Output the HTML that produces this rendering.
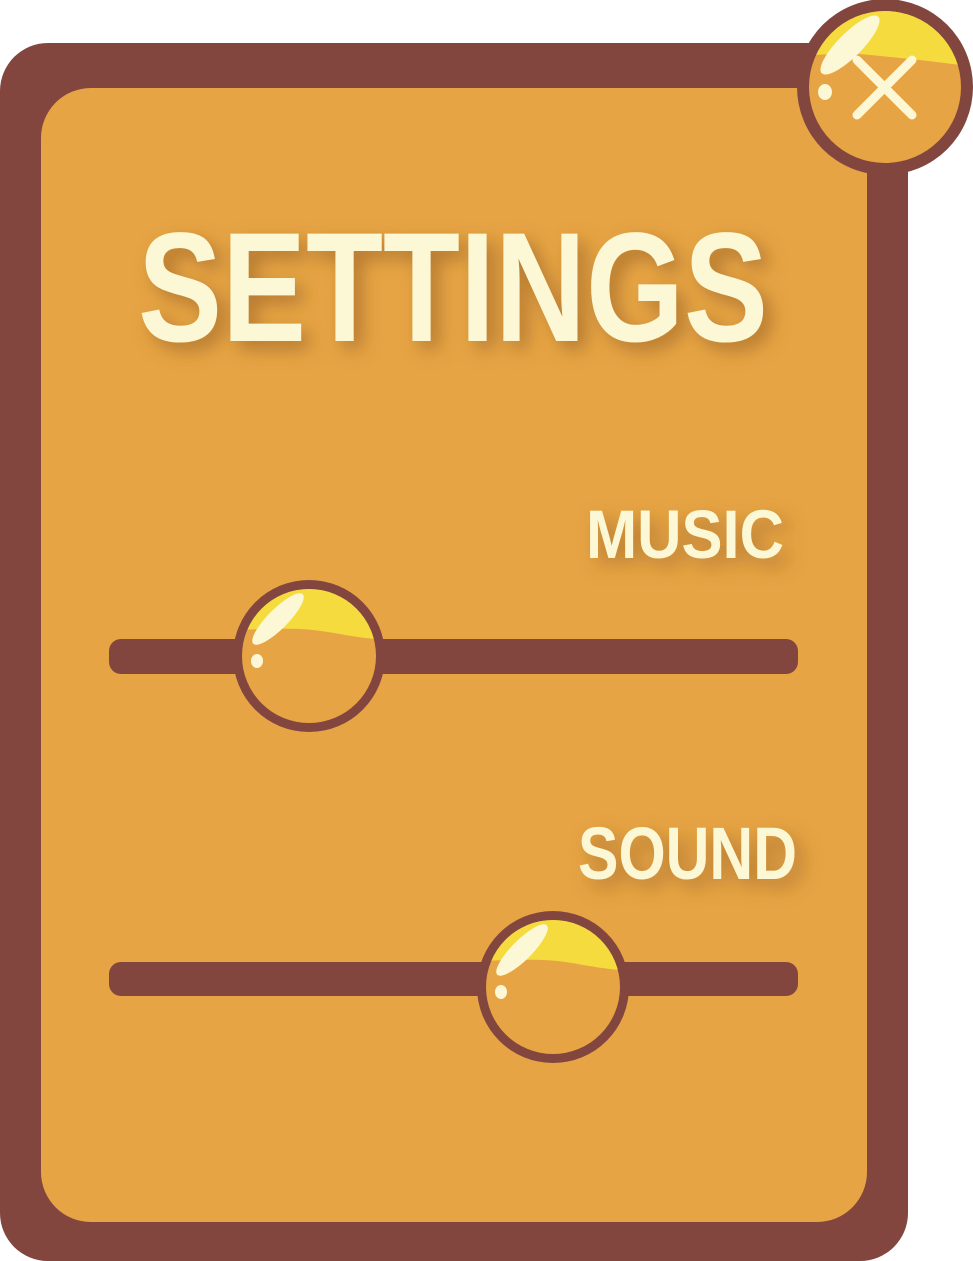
<!DOCTYPE html>
<html><head><meta charset="utf-8"><style>
html,body{margin:0;padding:0;background:#fff;width:973px;height:1261px;overflow:hidden}
svg{display:block}
text{font-family:"Liberation Sans",sans-serif;font-weight:bold;fill:#FCF8D5}
</style></head><body>
<svg width="973" height="1261" viewBox="0 0 973 1261" xmlns="http://www.w3.org/2000/svg">
<defs>
<filter id="sh" x="-20%" y="-40%" width="140%" height="180%">
<feGaussianBlur in="SourceAlpha" stdDeviation="9"/>
<feOffset dx="8" dy="8" result="b"/>
<feFlood flood-color="#8a5420" flood-opacity="0.55"/>
<feComposite in2="b" operator="in"/>
<feMerge><feMergeNode/><feMergeNode in="SourceGraphic"/></feMerge>
</filter>
<clipPath id="kc"><circle cx="0" cy="0" r="67"/></clipPath>
<g id="knob">
<circle r="76" fill="#82463F"/>
<circle r="67" fill="#E6A444"/>
<g clip-path="url(#kc)">
<path d="M-80,-80 L80,-80 L80,-16 C40,-18 20,-26 -10,-27 C-40,-28 -60,-26 -80,-26 Z" fill="#F5DB3E"/>
</g>
<ellipse cx="-31" cy="-37" rx="35" ry="10" transform="rotate(-45 -31 -37)" fill="#FCF8D5"/>
<ellipse cx="-52" cy="5" rx="6" ry="7" fill="#FCF8D5"/>
</g>
<clipPath id="cc"><circle cx="885" cy="87" r="76"/></clipPath>
</defs>
<rect x="0" y="43" width="908" height="1218" rx="48" fill="#82463F"/>
<rect x="41" y="88" width="826" height="1134" rx="50" fill="#E6A444"/>

<g filter="url(#sh)">
<text x="138" y="341" font-size="156" textLength="630" lengthAdjust="spacingAndGlyphs">SETTINGS</text>
<text x="586" y="558" font-size="69" textLength="198" lengthAdjust="spacingAndGlyphs">MUSIC</text>
<text x="578" y="879" font-size="74" textLength="219" lengthAdjust="spacingAndGlyphs">SOUND</text>
</g>

<rect x="109" y="639" width="689" height="35" rx="12" fill="#82463F"/>
<use href="#knob" x="309" y="656"/>
<rect x="109" y="962" width="689" height="34" rx="12" fill="#82463F"/>
<use href="#knob" x="553" y="987"/>

<circle cx="885" cy="87" r="88" fill="#82463F"/>
<circle cx="885" cy="87" r="76" fill="#E6A444"/>
<g clip-path="url(#cc)">
<path d="M800,0 L980,0 L980,68 C940,62 920,60 880,56 C850,52 830,54 800,56 Z" fill="#F5DB3E"/>
</g>
<ellipse cx="850" cy="45" rx="40" ry="12" transform="rotate(-45 850 45)" fill="#FCF8D5"/>
<ellipse cx="825" cy="92" rx="7" ry="8" fill="#FCF8D5"/>
<path d="M857,60 L912,115 M912,60 L857,115" stroke="#FCF8D5" stroke-width="9" stroke-linecap="round"/>
</svg>
</body></html>
